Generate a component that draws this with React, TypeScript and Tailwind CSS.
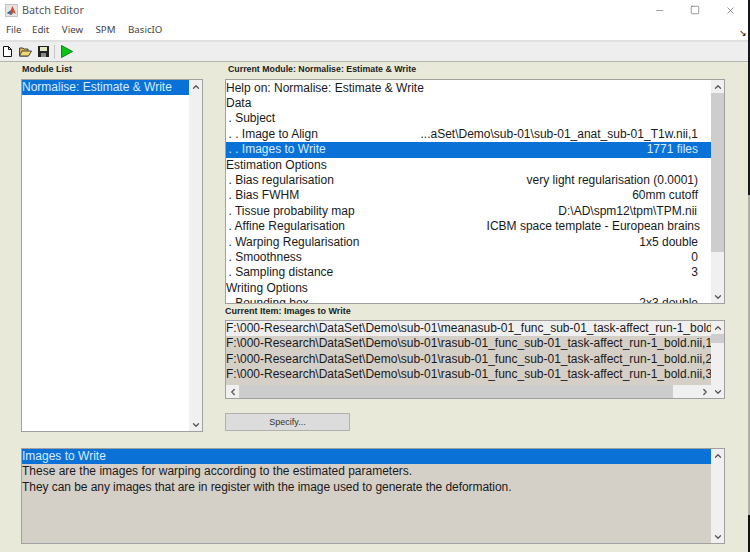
import { ChevronUp, ChevronDown, ChevronLeft, ChevronRight, Minus, Square, X } from "lucide-react";

const rows: [string, string, string?, boolean?][] = [
  ["Help on: Normalise: Estimate & Write", ""],
  ["Data", ""],
  [". Subject", ""],
  [". . Image to Align", "...aSet\\Demo\\sub-01\\sub-01_anat_sub-01_T1w.nii,1"],
  [". . Images to Write", "1771 files", "", true],
  ["Estimation Options", ""],
  [". Bias regularisation", "very light regularisation (0.0001)"],
  [". Bias FWHM", "60mm cutoff"],
  [". Tissue probability map", "D:\\AD\\spm12\\tpm\\TPM.nii", "mr-[1px]"],
  [". Affine Regularisation", "ICBM space template - European brains", "-mr-[2px]"],
  [". Warping Regularisation", "1x5 double"],
  [". Smoothness", "0"],
  [". Sampling distance", "3"],
  ["Writing Options", ""],
  [". Bounding box", "2x3 double"],
];

const files = [
  "F:\\000-Research\\DataSet\\Demo\\sub-01\\meanasub-01_func_sub-01_task-affect_run-1_bold.nii,1",
  "F:\\000-Research\\DataSet\\Demo\\sub-01\\rasub-01_func_sub-01_task-affect_run-1_bold.nii,1",
  "F:\\000-Research\\DataSet\\Demo\\sub-01\\rasub-01_func_sub-01_task-affect_run-1_bold.nii,2",
  "F:\\000-Research\\DataSet\\Demo\\sub-01\\rasub-01_func_sub-01_task-affect_run-1_bold.nii,3",
];

function VScroll({ thumbTop = 0, thumbH = 0 }: { thumbTop?: number; thumbH?: number }) {
  return (
    <div className="w-[13px] shrink-0 h-full flex flex-col bg-[#f0f0f0]">
      <div className="h-[13px] shrink-0 flex items-center justify-center">
        <ChevronUp size={10} strokeWidth={3} className="text-[#555]" />
      </div>
      <div className="flex-1 min-h-0 overflow-hidden">
        {thumbH > 0 && <div className="bg-[#cdcdcd]" style={{ marginTop: thumbTop, height: thumbH }} />}
      </div>
      <div className="h-[13px] shrink-0 flex items-center justify-center">
        <ChevronDown size={10} strokeWidth={3} className="text-[#555]" />
      </div>
    </div>
  );
}

export default function App() {
  return (
    <div className="w-[750px] h-[552px] overflow-hidden flex bg-white font-['Liberation_Sans',Arial,sans-serif] text-[12px] leading-[15.4px] text-[#1a1a1a]">
      <div className="w-[748px] shrink-0">
        {/* Title bar */}
        <div className="h-[20px] flex items-center pl-[5px] pr-[12px]">
          <svg width="13" height="13" viewBox="0 0 13 13" className="mr-[4px]">
            <rect x="0.5" y="0.5" width="12" height="12" fill="#e4e4e4" stroke="#c4c4c4" />
            <path d="M2 9 L5.5 6.5 L7.5 2 L11 10 L8.5 8.5 L6.5 11 Z" fill="#c9502a" />
            <path d="M2 9 L5.5 6.5 L6.5 11 Z" fill="#3a6ea5" />
          </svg>
          <span className="text-[#555] text-[10.8px] font-['Noto_Sans',sans-serif]">Batch Editor</span>
          <div className="ml-auto flex items-center gap-[25px] text-[#555]">
            <Minus size={11} strokeWidth={1.2} />
            <Square size={10} strokeWidth={1.4} />
            <X size={11} strokeWidth={1.3} />
          </div>
        </div>
        {/* Menu */}
        <div className="h-[20px] flex items-center pl-[6px] gap-[12.5px] text-[9.7px] text-[#444] font-['Noto_Sans',sans-serif] relative">
          <span className="-mr-[2px]">File</span>
          <span>Edit</span>
          <span>View</span>
          <span>SPM</span>
          <span>BasicIO</span>
          <span className="absolute right-[1px] top-[8px] text-[9px] leading-[9px] text-black">↘</span>
        </div>
        {/* Toolbar */}
        <div className="h-[22px] bg-[#eeeeee] border-t-2 border-[#e0e0e0] border-b border-b-[#b5b5ad] flex items-center pl-[3px]">
          <svg width="9" height="11" viewBox="0 0 9 11">
            <path d="M0.5 0.5 H5.5 L8.5 3.5 V10.5 H0.5 Z M5.5 0.5 V3.5 H8.5" fill="#fff" stroke="#111" />
          </svg>
          <svg width="13" height="11" viewBox="0 0 13 11" className="ml-[7px]">
            <path d="M0.5 2 H4 L5 3 H9 V10 H0.5 Z" fill="#d8b24a" stroke="#444" />
            <path d="M0.5 10 L3 5 H12.5 L9.5 10 Z" fill="#f2d873" stroke="#444" />
          </svg>
          <svg width="11" height="11" viewBox="0 0 11 11" className="ml-[6px]">
            <rect x="0" y="0" width="11" height="11" fill="#222" />
            <rect x="2" y="1" width="7" height="4" fill="#e6e6c8" />
            <rect x="3" y="7" width="5" height="4" fill="#888" />
          </svg>
          <div className="w-px h-[14px] bg-[#c4c4c4] ml-[5px]" />
          <svg width="12" height="13" viewBox="0 0 12 13" className="ml-[6px]">
            <path d="M0.5 0.5 L11.5 6.5 L0.5 12.5 Z" fill="#09c414" stroke="#0a8a10" />
          </svg>
        </div>
        {/* Main */}
        <div className="h-[490px] bg-[#e9e9d9] pl-[21px] pt-[3px]">
          <div className="flex h-[367px]">
            <div className="w-[182px] shrink-0 flex flex-col">
              <div className="h-[14px] pl-[1px] text-[9px] font-bold leading-[8px] text-[#222]">Module List</div>
              <div className="flex-1 bg-white border border-[#a0a0a0] flex min-h-0">
                <div className="flex-1 min-w-0">
                  <div className="bg-[#0a72d6] text-[#d8ecff] h-[15px] whitespace-nowrap">Normalise: Estimate &amp; Write</div>
                </div>
                <VScroll />
              </div>
            </div>
            <div className="ml-[22px] w-[500px] shrink-0 flex flex-col">
              <div className="h-[14px] pl-[3px] text-[8.8px] font-bold leading-[8px] text-[#222]">Current Module: Normalise: Estimate &amp; Write</div>
              <div className="h-[225px] bg-white border border-[#a0a0a0] flex overflow-hidden">
                <div className="flex-1 min-w-0 overflow-hidden pt-[0.7px]">
                  {rows.map(([label, value, shift, selected]) => (
                    <div key={label} className={`h-[15.4px] flex justify-between pr-[13px] whitespace-nowrap ${label.startsWith(".") ? "pl-[2.5px]" : ""} ${selected ? "bg-[#0a72d6] text-[#d8ecff]" : ""}`}>
                      <span>{label}</span>
                      <span className={shift}>{value}</span>
                    </div>
                  ))}
                </div>
                <VScroll thumbH={159} />
              </div>
              <div className="h-[16px] text-[9px] font-bold leading-[15px] text-[#222]">Current Item: Images to Write</div>
              <div className="h-[79px] bg-[#f0f0f0] border border-[#a0a0a0] flex overflow-hidden">
                <div className="flex-1 min-w-0 flex flex-col">
                  <div className="h-[64px] overflow-hidden bg-[#d4d0c8]">
                    {files.map((f, i) => (
                      <div key={f} className={`h-[15.4px] whitespace-nowrap overflow-hidden ${i === 0 ? "bg-[#efefef]" : ""}`}>{f}</div>
                    ))}
                  </div>
                  <div className="mt-auto h-[13px] flex bg-[#f0f0f0]">
                    <div className="w-[13px] flex items-center justify-center"><ChevronLeft size={10} strokeWidth={3} className="text-[#555]" /></div>
                    <div className="w-[434px] bg-[#cdcdcd]" />
                    <div className="flex-1 flex items-center justify-center pl-[26px]"><ChevronRight size={10} strokeWidth={3} className="text-[#555]" /></div>
                  </div>
                </div>
                <VScroll thumbTop={0} thumbH={9} />
              </div>
              <div className="mt-[14px] w-[125px] h-[18px] bg-[#dcdcdc] border border-[#b0b0b0] text-[9px] leading-[16px] text-center text-[#333]">Specify...</div>
            </div>
          </div>
          {/* Help */}
          <div className="mt-[16px] w-[704px] h-[96px] bg-[#d4d0c8] border border-[#a0a0a0] flex overflow-hidden">
            <div className="flex-1 min-w-0">
              <div className="h-[15.4px] bg-[#0a72d6] text-[#d8ecff]">Images to Write</div>
              <div>These are the images for warping according to the estimated parameters.</div>
              <div className="tracking-[-0.06px]">They can be any images that are in register with the image used to generate the deformation.</div>
            </div>
            <VScroll />
          </div>
        </div>
      </div>
      {/* Desktop showing behind the window */}
      <div className="w-[2px] shrink-0 flex flex-col">
        <div className="h-[195px] bg-[#15151c]" />
        <div className="h-[320px] bg-[#b0b0a8]" />
        <div className="flex-1 bg-[#111]" />
      </div>
    </div>
  );
}
